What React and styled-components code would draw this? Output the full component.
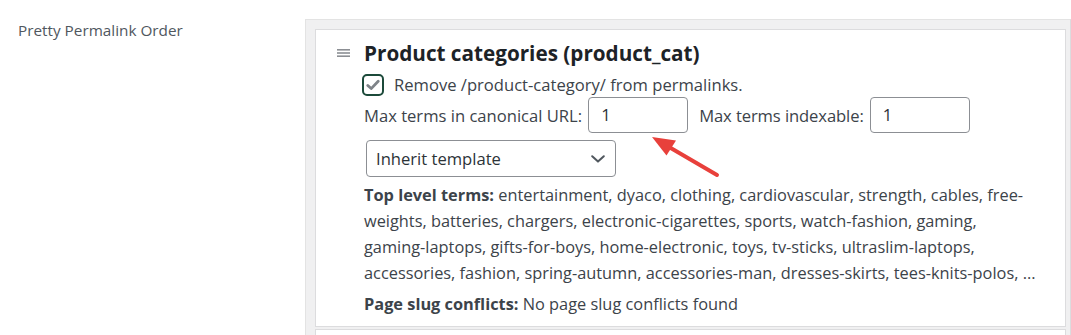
import React from "react";
import styled, { createGlobalStyle } from "styled-components";

const GlobalStyle = createGlobalStyle`
  html, body {
    margin: 0;
    padding: 0;
    background: #ffffff;
    overflow: hidden;
  }
  body {
    font-family: "Open Sans", "Noto Sans", sans-serif;
    color: #3c434a;
  }
`;

const Page = styled.div`
  display: flex;
  align-items: flex-start;
  width: 1071px;
  height: 335px;
  overflow: hidden;
`;

const RowLabel = styled.div`
  box-sizing: border-box;
  width: 305px;
  padding: 20px 0 0 18px;
  font-size: 15.3px;
  line-height: 21px;
  color: #50575e;
`;

const SortList = styled.div`
  box-sizing: border-box;
  margin-top: 19px;
  width: 766px;
  min-height: 330px;
  background: #f0f0f1;
  border: 1px solid #e3e3e3;
  border-right-color: #dcdcde;
  padding: 9px 4px 0 9px;
  display: flex;
  flex-direction: column;
  gap: 2px;
`;

const Item = styled.div`
  position: relative;
  box-sizing: border-box;
  background: #ffffff;
  border: 1px solid #dcdcde;
  display: grid;
  grid-template-columns: 48px 1fr;
  padding: ${(p) => (p.$stub ? "0" : "9px 0 9px 0")};
  min-height: ${(p) => (p.$stub ? "60px" : "auto")};
`;

const Handle = styled.div`
  display: flex;
  align-items: flex-start;
  padding: 10px 0 0 21px;
  color: #8c8f94;
`;

const Content = styled.div`
  display: flex;
  flex-direction: column;
  align-items: flex-start;
`;

const Title = styled.h3`
  margin: 0;
  font-size: 20.7px;
  line-height: 28px;
  font-weight: 700;
  color: #1d2327;
`;

const CheckRow = styled.label`
  display: flex;
  align-items: center;
  gap: 10px;
  margin-top: 6px;
  font-size: 16.6px;
  line-height: 24px;
`;

const CheckBox = styled.span`
  box-sizing: border-box;
  margin-left: -2px;
  width: 22px;
  height: 22px;
  border: 2px solid #1c4a3a;
  border-radius: 5px;
  display: flex;
  align-items: center;
  justify-content: center;
  color: #7e8388;
`;

const FieldRow = styled.div`
  display: flex;
  align-items: center;
  margin-top: 0;
  font-size: 16.6px;
  line-height: 24px;
`;

const FieldLabel = styled.span`
  padding-top: 2px;
  margin-right: 6px;
  margin-left: ${(p) => (p.$spaced ? "11px" : "0")};
  letter-spacing: ${(p) => (p.$spaced ? "-0.1px" : "0")};
`;

const NumberBox = styled.div`
  box-sizing: border-box;
  width: 100px;
  height: 36px;
  border: 1px solid #8c8f94;
  border-radius: 4px;
  padding: 0 12px;
  display: flex;
  align-items: center;
  font-size: 16.6px;
  color: #2c3338;
`;

const Select = styled.div`
  box-sizing: border-box;
  margin: 7px 0 0 2px;
  width: 250px;
  height: 37px;
  border: 1px solid #8c8f94;
  border-radius: 4px;
  padding: 0 10px 0 9px;
  display: flex;
  align-items: center;
  justify-content: space-between;
  font-size: 16.6px;
  color: #2c3338;
`;

const Para = styled.p`
  margin: 5px 0 0 0;
  font-size: 16.35px;
  line-height: 26px;
  white-space: nowrap;
  b {
    font-weight: 700;
    color: #3c434a;
  }
`;

const Arrow = styled.svg`
  position: absolute;
  left: 329px;
  top: 100px;
  width: 80px;
  height: 50px;
  overflow: visible;
`;

const HandleIcon = () => (
  <svg width="13" height="9" viewBox="0 0 13 9">
    <rect x="0" y="0" width="13" height="1.6" fill="currentColor" />
    <rect x="0" y="3.2" width="13" height="1.6" fill="currentColor" />
    <rect x="0" y="6.4" width="13" height="1.6" fill="currentColor" />
  </svg>
);

const CheckMark = () => (
  <svg width="14" height="12" viewBox="0 0 14 12">
    <path
      d="M1.8 6.4 L5.2 9.6 L12.2 2.2"
      fill="none"
      stroke="currentColor"
      strokeWidth="2.8"
      strokeLinecap="round"
      strokeLinejoin="round"
    />
  </svg>
);

const Chevron = () => (
  <svg width="14" height="8" viewBox="0 0 14 8">
    <path
      d="M1.2 1.2 L7 6.6 L12.8 1.2"
      fill="none"
      stroke="#50575e"
      strokeWidth="2"
      strokeLinecap="round"
      strokeLinejoin="round"
    />
  </svg>
);

export default function App() {
  return (
    <>
      <GlobalStyle />
      <Page>
        <RowLabel>Pretty Permalink Order</RowLabel>
        <SortList>
          <Item>
            <Handle>
              <HandleIcon />
            </Handle>
            <Content>
              <Title>Product categories (product_cat)</Title>
              <CheckRow>
                <CheckBox>
                  <CheckMark />
                </CheckBox>
                Remove /product-category/ from permalinks.
              </CheckRow>
              <FieldRow>
                <FieldLabel>Max terms in canonical URL:</FieldLabel>
                <NumberBox>1</NumberBox>
                <FieldLabel $spaced>Max terms indexable:</FieldLabel>
                <NumberBox>1</NumberBox>
              </FieldRow>
              <Select>
                <span>Inherit template</span>
                <Chevron />
              </Select>
              <Para>
                <b>Top level terms:</b> entertainment, dyaco, clothing, cardiovascular, strength, cables, free-
                <br />
                weights, batteries, chargers, electronic-cigarettes, sports, watch-fashion, gaming,
                <br />
                gaming-laptops, gifts-for-boys, home-electronic, toys, tv-sticks, ultraslim-laptops,
                <br />
                accessories, fashion, spring-autumn, accessories-man, dresses-skirts, tees-knits-polos, ...
              </Para>
              <Para>
                <b>Page slug conflicts:</b> No page slug conflicts found
              </Para>
            </Content>
            <Arrow viewBox="0 0 80 50">
              <line x1="24" y1="17" x2="72" y2="45" stroke="#e8403b" strokeWidth="4" strokeLinecap="round" />
              <polygon points="7,7 31,10.6 21.5,25.6" fill="#e8403b" />
            </Arrow>
          </Item>
          <Item $stub />
        </SortList>
      </Page>
    </>
  );
}
